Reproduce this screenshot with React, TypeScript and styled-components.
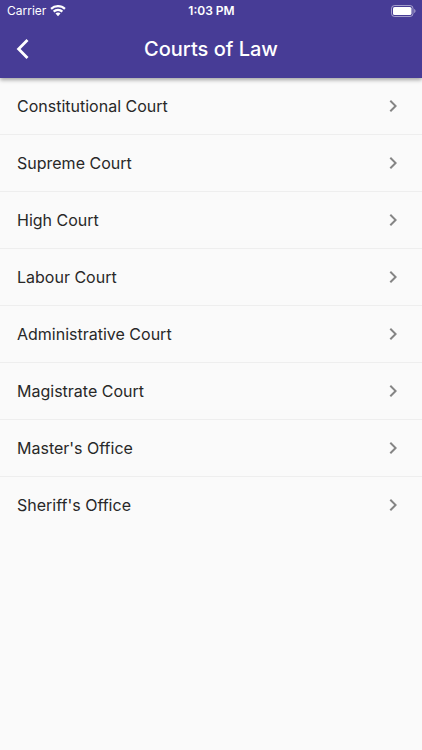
import React from "react";
import styled, { createGlobalStyle } from "styled-components";

const GlobalStyle = createGlobalStyle`
  * { box-sizing: border-box; }
  body { margin: 0; background: #fafafa; font-family: Inter, "Liberation Sans", sans-serif; }
`;

const Screen = styled.div`
  min-height: 100vh;
  background: #fafafa;
`;

const Header = styled.header`
  position: relative;
  background: #473c96;
  color: #fff;
  box-shadow: 0 2px 4px rgba(0, 0, 0, 0.35);
`;

const StatusBar = styled.div`
  display: grid;
  grid-template-columns: 1fr auto 1fr;
  align-items: center;
  height: 22px;
  padding: 0 6px 0 7px;
  font-size: 12px;
  line-height: 16px;
`;

const Carrier = styled.span`
  display: flex;
  align-items: center;
  gap: 4px;
`;

const Clock = styled.time`
  font-weight: 600;
`;

const BatterySlot = styled.span`
  display: flex;
  justify-content: flex-end;
`;

const TitleBar = styled.div`
  display: grid;
  grid-template-columns: 48px 1fr 48px;
  align-items: center;
  height: 56px;
  padding-bottom: 2px;
`;

const BackButton = styled.button`
  display: flex;
  align-items: center;
  justify-content: center;
  height: 48px;
  padding: 0;
  border: 0;
  background: none;
  color: inherit;
  cursor: pointer;
`;

const Title = styled.h1`
  margin: 0;
  font-size: 20px;
  line-height: 24px;
  font-weight: 500;
  text-align: center;
`;

const List = styled.ul`
  margin: 0;
  padding: 0;
  list-style: none;
`;

const Item = styled.li`
  border-bottom: 1px solid #eeeeee;
  &:last-child { border-bottom: 0; }
`;

const RowLink = styled.a`
  display: flex;
  align-items: center;
  justify-content: space-between;
  height: 56px;
  padding: 0 17px;
  color: #282828;
  font-size: 16px;
  line-height: 24px;
  text-decoration: none;
`;

const courts = [
  "Constitutional Court",
  "Supreme Court",
  "High Court",
  "Labour Court",
  "Administrative Court",
  "Magistrate Court",
  "Master's Office",
  "Sheriff's Office",
];

const Wifi = () => (
  <svg width="16" height="12" viewBox="0 0 16 12" fill="currentColor" aria-hidden="true">
    <path d="M8 0c3 0 5.700 1.100 7.700 3l-1.500 1.700A9 9 0 0 0 8 2.300 9 9 0 0 0 1.800 4.700L.3 3A11.200 11.200 0 0 1 8 0z" />
    <path d="M8 3.800c2 0 3.800.8 5.100 2l-1.500 1.700A5.300 5.300 0 0 0 8 6a5.300 5.300 0 0 0-3.600 1.500L2.900 5.800A7.500 7.500 0 0 1 8 3.800z" />
    <path d="M8 7.500c1 0 1.900.4 2.500 1L8 11.300 5.500 8.500c.6-.6 1.500-1 2.500-1z" />
  </svg>
);

const Battery = () => (
  <svg width="25" height="12" viewBox="0 0 25 12" fill="none" aria-hidden="true">
    <rect x=".5" y=".5" width="21.500" height="11" rx="3" stroke="#fff" strokeOpacity=".5" />
    <rect x="2" y="2" width="18.500" height="8" rx="1.600" fill="#fff" />
    <path d="M23.200 4c.8.3 1.300 1.100 1.300 2s-.5 1.700-1.300 2z" fill="#fff" fillOpacity=".5" />
  </svg>
);

const BackIcon = () => (
  <svg width="24" height="24" viewBox="0 0 24 24" fill="none" aria-hidden="true">
    <path d="M15.500 3.100L6.600 12l8.900 8.900" stroke="currentColor" strokeWidth="2.800" />
  </svg>
);

const Chevron = () => (
  <svg width="24" height="24" viewBox="0 0 24 24" fill="#858585" aria-hidden="true">
    <path d="M10 6L8.590 7.410 13.170 12l-4.580 4.590L10 18l6-6z" />
  </svg>
);

export default function App() {
  return (
    <Screen>
      <GlobalStyle />
      <Header>
        <StatusBar>
          <Carrier>Carrier <Wifi /></Carrier>
          <Clock>1:03 PM</Clock>
          <BatterySlot><Battery /></BatterySlot>
        </StatusBar>
        <TitleBar>
          <BackButton type="button" aria-label="Back"><BackIcon /></BackButton>
          <Title>Courts of Law</Title>
        </TitleBar>
      </Header>
      <main>
        <List>
          {courts.map((court) => (
            <Item key={court}>
              <RowLink href="#">
                <span>{court}</span>
                <Chevron />
              </RowLink>
            </Item>
          ))}
        </List>
      </main>
    </Screen>
  );
}
